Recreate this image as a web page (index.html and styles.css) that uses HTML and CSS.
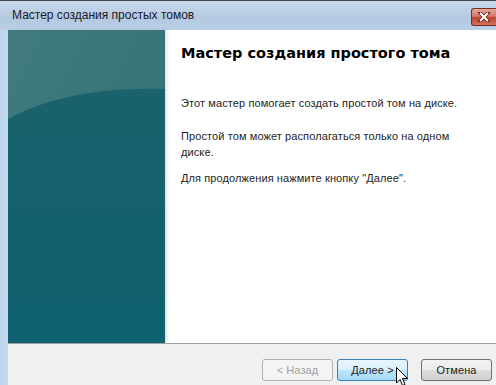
FILE: index.html
```html
<!DOCTYPE html>
<html lang="ru">
<head>
  <meta charset="UTF-8" />
  <title>Мастер создания простых томов</title>
  <link rel="stylesheet" href="styles.css">
</head>
<body>

  <div class="window">
    <!-- Title bar -->
    <div class="titlebar">
      <span class="title">Мастер создания простых томов</span>
      <div class="close-btn">
        <svg width="12" height="10" viewBox="0 0 12 10">
          <path d="M2 1 L10 9 M10 1 L2 9" stroke="#6b1a10" stroke-width="3.4" stroke-linecap="square"/>
          <path d="M2 1 L10 9 M10 1 L2 9" stroke="#fff" stroke-width="2"/>
        </svg>
      </div>
    </div>

    <div class="client">
      <div class="main">
        <!-- Left banner -->
        <div class="side">
          <svg width="157" height="313" viewBox="0 0 157 313">
            <defs>
              <linearGradient id="top" x1="0" y1="0" x2="1" y2="1">
                <stop offset="0" stop-color="#417b7d"/>
                <stop offset="1" stop-color="#2e6e74"/>
              </linearGradient>
              <linearGradient id="bottom" x1="0" y1="0" x2="0" y2="1">
                <stop offset="0" stop-color="#1a626c"/>
                <stop offset="0.5" stop-color="#14616d"/>
                <stop offset="1" stop-color="#0f6170"/>
              </linearGradient>
            </defs>
            <rect width="157" height="313" fill="url(#top)"/>
            <path d="M0 89 Q60 56 157 59 L157 313 L0 313 Z" fill="url(#bottom)"/>
          </svg>
        </div>

        <!-- Page text -->
        <div class="content">
          <h1>Мастер создания простого тома</h1>
          <p class="intro">Этот мастер помогает создать простой том на диске.</p>
          <p class="note">Простой том может располагаться только на одном диске.</p>
          <p class="hint">Для продолжения нажмите кнопку "Далее".</p>
        </div>
      </div>

      <div class="footer">
        <button class="btn" disabled>&lt; Назад</button>
        <button class="btn btn-default">Далее &gt;</button>
        <button class="btn btn-cancel">Отмена</button>
      </div>
    </div>

    <!-- Mouse pointer over "Далее" -->
    <svg class="cursor" width="13" height="20" viewBox="0 0 13 20">
      <path d="M0.5 0.5 L0.5 16 L4 12.5 L6.5 18.5 L9 17.5 L6.5 11.5 L11.5 11.5 Z" fill="#fff" stroke="#000" stroke-width="1"/>
    </svg>
  </div>

</body>
</html>
```

FILE: styles.css
```css
body {
  margin: 0;
  width: 496px;
  height: 385px;
  overflow: hidden;
  font-family: "Liberation Sans", Arial, sans-serif;
  background: #b9d0e8;
}

.window {
  position: relative;
  width: 496px;
  height: 385px;
  border-top: 1px solid #3d4650;
  box-sizing: border-box;
  background: linear-gradient(to right, #bcd3ec 0, #c3d8ee 6px, #b9cfe6 100%);
}

.titlebar {
  height: 29px;
  display: flex;
  align-items: center;
  justify-content: space-between;
  padding-left: 12px;
  background: linear-gradient(#c9d9ea, #b3c9e1 60%, #bad0e7);
}

.title {
  font-size: 12px;
  color: #1a1a2a;
  margin-top: -1px;
}

.close-btn {
  width: 24px;
  height: 16px;
  margin-top: 2px;
  display: flex;
  align-items: center;
  justify-content: center;
  border: 1px solid #7a2d22;
  border-right: none;
  border-radius: 3px 0 0 3px;
  background: linear-gradient(#e6a797, #d27a66 45%, #c0452f 55%, #d4725a);
}

.client {
  margin-left: 8px;
  background: #fff;
  height: 355px;
  display: flex;
  flex-direction: column;
}

.main {
  display: flex;
  height: 313px;
}

.side {
  width: 157px;
  height: 313px;
  box-shadow: 2px 0 3px rgba(0, 0, 0, 0.12);
}

.side svg {
  display: block;
}

.content {
  flex: 1;
  padding: 12px 14px 0 16px;
  font-size: 11px;
  letter-spacing: 0.1px;
  color: #1e1e1e;
}

h1 {
  font-family: "DejaVu Sans", Verdana, sans-serif;
  font-size: 14.5px;
  font-weight: bold;
  letter-spacing: 0;
  color: #000;
  margin: 0 0 31px;
  line-height: 22px;
}

p {
  margin: 0;
  line-height: 16px;
  max-width: 286px;
}

.note {
  margin-top: 17px;
}

.hint {
  margin-top: 10px;
}

.footer {
  flex: 1;
  border-top: 1px solid #a0a0a0;
  background: #f0f0f0;
  display: flex;
  justify-content: flex-end;
  align-items: flex-start;
  padding: 15px 4px 0 0;
  gap: 4px;
}

.btn {
  width: 71px;
  height: 22px;
  font-family: "Liberation Sans", Arial, sans-serif;
  font-size: 11px;
  letter-spacing: 0.1px;
  color: #1e1e1e;
  border: 1px solid #707070;
  border-radius: 3px;
  background: linear-gradient(#f2f2f2, #ebebeb 50%, #dddddd 51%, #cfcfcf);
  padding: 0;
}

.btn:disabled {
  color: #a0a0a0;
  border-color: #adb2b5;
  background: #f4f4f4;
}

.btn-default {
  border-color: #3c7fb1;
  background: linear-gradient(#eaf6fd, #d9f0fc 50%, #bee6fd 51%, #a7d9f5);
}

.btn-cancel {
  margin-left: 9px;
}

.cursor {
  position: absolute;
  left: 396px;
  top: 366px;
}
```
